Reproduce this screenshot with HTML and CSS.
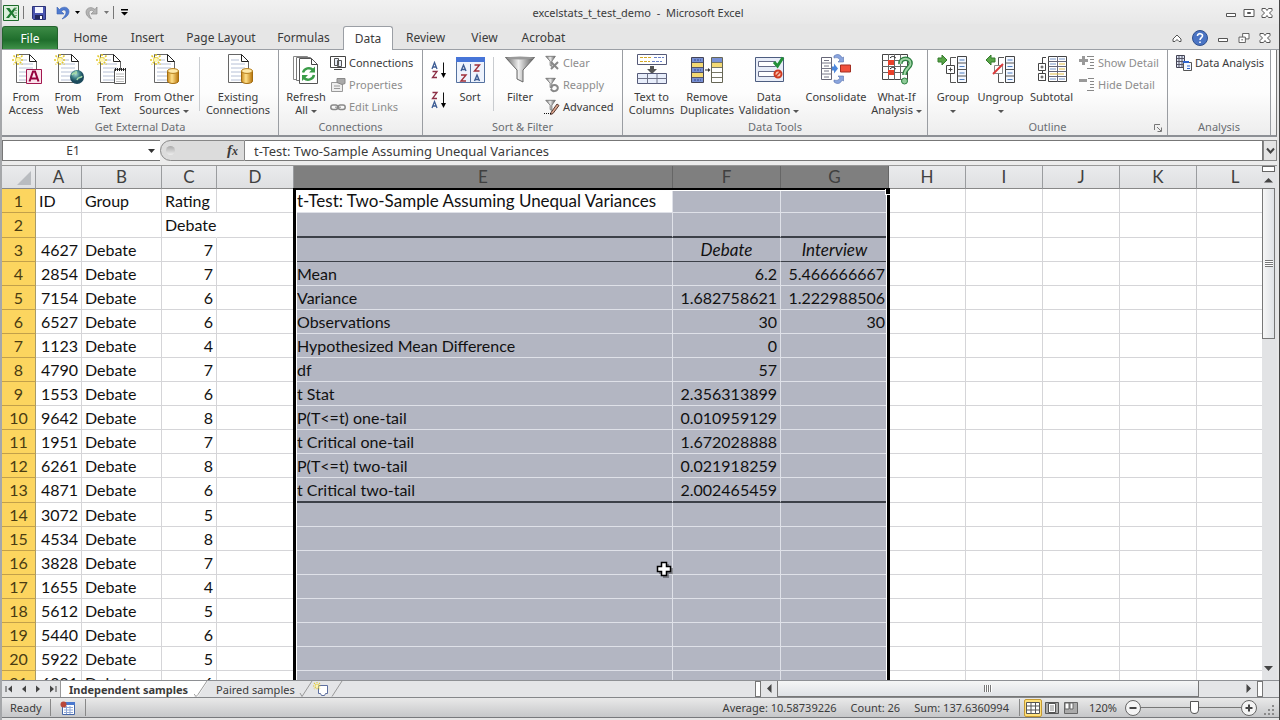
FILE: index.html
```html
<!DOCTYPE html>
<html lang="en">
<head>
<meta charset="utf-8">
<title>excelstats_t_test_demo - Microsoft Excel</title>
<link rel="stylesheet" href="styles.css">
</head>
<body>
<svg class="defs" aria-hidden="true">
  <defs>
    <linearGradient id="gold" x1="0" x2="1"><stop offset="0" stop-color="#c98a1c"/><stop offset=".4" stop-color="#ffe08a"/><stop offset="1" stop-color="#b87408"/></linearGradient>
    <linearGradient id="metal" x1="0" x2="1"><stop offset="0" stop-color="#666"/><stop offset=".45" stop-color="#eee"/><stop offset="1" stop-color="#555"/></linearGradient>
    <radialGradient id="globe" cx=".4" cy=".3"><stop offset="0" stop-color="#a9d8cf"/><stop offset=".6" stop-color="#3b7f86"/><stop offset="1" stop-color="#1c4a5c"/></radialGradient>
    <symbol id="page" viewBox="0 0 32 32">
      <path d="M6.500 1.500h13l7 7v21h-20z" fill="#fff" stroke="#666"/>
      <path d="M19.500 1.500v7h7z" fill="#fff" stroke="#222"/>
      <path d="M9 7h8M9 11h14M9 15h14M9 19h14M9 23h14M9 27h14" stroke="#b6c0d6"/>
    </symbol>
    <symbol id="spark" viewBox="0 0 12 12">
      <path d="M6 0v12M0 6h12M1.500 1.500l9 9M10.500 1.500l-9 9" stroke="#e3c92c" stroke-width="1.600" stroke-dasharray="2 1"/>
      <circle cx="6" cy="6" r="2.200" fill="#fff7b0"/>
    </symbol>
    <symbol id="drum" viewBox="0 0 12 16">
      <path d="M.5 3v10c0 3.300 11 3.300 11 0V3z" fill="url(#gold)" stroke="#a36c10"/>
      <ellipse cx="6" cy="3" rx="5.500" ry="2.400" fill="#ffe9a8" stroke="#b57e1a"/>
    </symbol>
    <symbol id="funnel" viewBox="0 0 16 16">
      <path d="M2 1.500h11L9 7v6L7 12V7z" fill="url(#metal)" stroke="#777"/>
    </symbol>
    <symbol id="outrows" viewBox="0 0 20 28">
      <path d="M7 1.500H1.500v8M1.500 18v8.500H7" fill="none" stroke="#555"/>
      <path d="M8.500.5h9v26h-9z" fill="#f4f8ff" stroke="#444"/>
      <path d="M8.500 7h9M8.500 13.500h9M8.500 20h9" stroke="#555"/>
      <path d="M10.500 4h5M10.500 10.500h5M10.500 17h5M10.500 23.500h5" stroke="#4f7fc0"/>
    </symbol>
  </defs>
</svg>

<div class="window">
<header class="titlebar">
  <div class="quick">
    <svg class="i16" viewBox="0 0 16 16"><path d="M.5.500h15v15H.5z" fill="#dcefdc" stroke="#1d6b2a"/><path d="M3 3l4 5-4 5h3l2.500-3.500L11 13h2.500L10 8l3.500-5H11L8.500 6 6.500 3z" fill="#1f7a32"/><path d="M11 3h3M11.500 5.500H14M11.500 8H14M11.500 10.500H14" stroke="#74a87a"/></svg>
    <span class="bar"></span>
    <button class="ico" aria-label="Save"><svg class="i16" viewBox="0 0 16 16"><path d="M1.500 1.500h13v13h-12l-1-1z" fill="#4a55b0" stroke="#2d3479"/><path d="M4 2h8v6H4z" fill="#f3f5ff"/><path d="M4 10h8v4H4z" fill="#23285c"/><path d="M9 11h2v3H9z" fill="#fff"/></svg></button>
    <button class="ico undo" aria-label="Undo"><svg class="i16" viewBox="0 0 16 16"><path d="M2 2v7h7L6.500 6.500C8 4 11.500 4.500 11 8c-.3 2-2 4-4 6 4-1.500 7-4 7-7.500C14 2 8 .5 4.500 4.500z" fill="#4f7bd0" stroke="#3c61b0" stroke-width=".6"/></svg></button>
    <svg class="caret" viewBox="0 0 5 3"><path d="M0 0h5L2.500 3z"/></svg>
    <button class="ico" aria-label="Redo"><svg class="i16" viewBox="0 0 16 16"><path d="M13 2v7H7l2.500-2.500C8 4.500 5 5 5 8c.2 2 1 4 2.500 6C4 12.500 2 10 2 7 2.500 2 8 1.500 11 4.500z" fill="#b5b5b5" stroke="#8b8b8b" stroke-width=".7"/></svg></button>
    <svg class="caret dim" viewBox="0 0 5 3"><path d="M0 0h5L2.500 3z"/></svg>
    <span class="bar"></span>
    <button class="ico" aria-label="Customize Quick Access Toolbar"><svg class="custom" viewBox="0 0 7 7"><path d="M0 0h7v1.500H0zM0 3h7L3.500 6.500z"/></svg></button>
  </div>
  <h1>excelstats_t_test_demo&nbsp; -&nbsp; Microsoft Excel</h1>
  <div class="winbtns">
    <button class="ico" aria-label="Minimize"><svg viewBox="0 0 12 10"><path d="M1.500 5.500h9v3h-9z" fill="#fff" stroke="#555"/></svg></button>
    <button class="ico" aria-label="Restore"><svg viewBox="0 0 12 10"><path d="M1 1.500h10v7H1zM4.500 4.500h3v1h-3z" fill="#fff" stroke="#555"/></svg></button>
    <button class="ico" aria-label="Close"><svg viewBox="0 0 12 10"><path d="M1 .5h3.500L6 2.500 7.500.500H11v2L8.500 5 11 7.500v2H7.500L6 7.500l-1.500 2H1v-2L3.500 5 1 2.500z" fill="#fff" stroke="#555"/></svg></button>
  </div>
</header>

<nav class="tabs">
  <button class="file">File</button>
  <button class="w1">Home</button><button class="w1">Insert</button><button class="w3">Page Layout</button><button class="w2">Formulas</button><button class="on">Data</button><button class="w2s">Review</button><button class="w1">View</button><button class="w2s">Acrobat</button>
  <div class="docbtns">
    <button class="ico" aria-label="Minimize the Ribbon"><svg viewBox="0 0 12 10"><path d="M2 6l4-4 4 4v2.500H8L6 6.500l-2 2H2z" fill="#fff" stroke="#555"/></svg></button>
    <button class="ico help" aria-label="Help"><svg viewBox="0 0 16 16"><circle cx="8" cy="8" r="7.500" fill="#4a74c4" stroke="#2f4f8c"/><path d="M5.500 6C5.500 2.800 11 3 10.500 6 10.300 7.500 8 8 8 10M8 11.500v1.500" fill="none" stroke="#fff" stroke-width="1.600"/></svg></button>
    <button class="ico" aria-label="Minimize Window"><svg viewBox="0 0 12 10"><path d="M1.500 5.500h9v3h-9z" fill="#fff" stroke="#555"/></svg></button>
    <button class="ico" aria-label="Restore Window"><svg viewBox="0 0 12 11"><path d="M4.500.5h7v6h-7z" fill="#fff" stroke="#555"/><path d="M.5 4.500h7v6h-7zM3 7.500h2" fill="#fff" stroke="#555"/></svg></button>
    <button class="ico" aria-label="Close Window"><svg viewBox="0 0 12 10"><path d="M1 .5h3.500L6 2.500 7.500.500H11v2L8.500 5 11 7.500v2H7.500L6 7.500l-1.500 2H1v-2L3.500 5 1 2.500z" fill="#fff" stroke="#555"/></svg></button>
  </div>
</nav>

<section class="ribbon">
  <div class="group g-ext">
    <div class="tools">
      <button class="big s"><svg viewBox="0 0 32 32"><use href="#page" width="32" height="32"/><use href="#spark" x="2" y="1" width="12" height="12"/><path d="M16.500 16.500h15v14h-15z" fill="#fbe3ec" stroke="#a3174f"/><path d="M19.500 28.500l3.500-10h2l3.500 10M21 25.500h6" fill="none" stroke="#95003c" stroke-width="2"/></svg>From<br>Access</button>
      <button class="big s"><svg viewBox="0 0 32 32"><use href="#page" width="32" height="32"/><use href="#spark" x="2" y="1" width="12" height="12"/><circle cx="25" cy="24" r="7" fill="url(#globe)"/><path d="M20 22c3-5 5 2 4-4M25 27c1-4 4-1 5-4" stroke="#a5dba8" fill="none" stroke-width="1.500"/></svg>From<br>Web</button>
      <button class="big s"><svg viewBox="0 0 32 32"><use href="#page" width="32" height="32"/><use href="#spark" x="2" y="1" width="12" height="12"/><path d="M20.500 16.500h11v14h-11z" fill="#fff" stroke="#555"/><path d="M21 16.500h11" stroke="#222" stroke-width="3" stroke-dasharray="1 1"/><path d="M22 21h8M22 23.500h8M22 26h8M22 28.500h8" stroke="#bbb"/></svg>From<br>Text</button>
      <button class="big m"><svg viewBox="0 0 32 32"><use href="#page" width="32" height="32"/><use href="#spark" x="2" y="1" width="12" height="12"/><use href="#drum" x="19" y="15" width="12" height="16"/></svg>From Other<br>Sources <i class="dd"></i></button>
      <span class="vsep"></span>
      <button class="big l"><svg viewBox="0 0 32 32"><use href="#page" width="32" height="32"/><use href="#drum" x="19" y="15" width="12" height="16"/></svg>Existing<br>Connections</button>
    </div>
    <h2>Get External Data</h2>
  </div>

  <div class="group g-con">
    <div class="tools">
      <button class="big s"><svg viewBox="0 0 32 32"><path d="M3.500 3.500h14v23h-14z" fill="#fff" stroke="#888"/><path d="M6.500 4.500h14v23h-14z" fill="#fff" stroke="#777"/><path d="M9.500 5.500h12l6 6v19h-18z" fill="#fff" stroke="#555"/><path d="M21.500 5.500v6h6" fill="none" stroke="#444"/><path d="M13 19.500a6 6 0 0 1 10-2.500M24 22a6 6 0 0 1-10 3" fill="none" stroke="#3a9c48" stroke-width="2.500"/><path d="M25 13.500v6h-6zM12 28v-6h6z" fill="#3a9c48"/></svg>Refresh<br>All <i class="dd"></i></button>
      <div class="stack">
        <button class="sm"><svg viewBox="0 0 16 16"><path d="M.5 1.500h15v11H.5z" fill="#fff" stroke="#444"/><path d="M4.500 3.500h4v7h-4zM7.500 5.500h4v6h-4z" fill="#e8edf7" stroke="#555"/><path d="M4 14.500h8" stroke="#444"/></svg>Connections</button>
        <button class="sm" disabled><svg viewBox="0 0 16 16"><path d="M1.500 5.500h11v9h-11z" fill="#eee" stroke="#999"/><path d="M7 1.500h8v5l-3 1-5-2z" fill="#aaa" stroke="#888"/><path d="M4 9h6M4 11.500h6" stroke="#999"/></svg>Properties</button>
        <button class="sm" disabled><svg viewBox="0 0 16 16"><rect x=".8" y="6" width="7" height="4.500" rx="2.200" fill="none" stroke="#888" stroke-width="1.500"/><rect x="8.200" y="6" width="7" height="4.500" rx="2.200" fill="none" stroke="#888" stroke-width="1.500"/><path d="M5 8.200h6" stroke="#888"/></svg>Edit Links</button>
      </div>
    </div>
    <h2>Connections</h2>
  </div>

  <div class="group g-sort">
    <div class="tools">
      <div class="az">
        <button class="ico" aria-label="Sort A to Z"><svg viewBox="0 0 16 18"><path d="M1 8L3.500 1.500 6 8M2 6h3" fill="none" stroke="#3d5c94" stroke-width="1.300"/><path d="M1.500 10.500H6l-4.500 6H6" fill="none" stroke="#8c2f45" stroke-width="1.300"/><path d="M12.500 1.500v13" stroke="#111"/><path d="M10 12h5l-2.500 5z"/></svg></button>
        <button class="ico" aria-label="Sort Z to A"><svg viewBox="0 0 16 18"><path d="M1.500 1.500H6l-4.500 6H6" fill="none" stroke="#8c2f45" stroke-width="1.300"/><path d="M1 17l2.500-6.500L6 17M2 15h3" fill="none" stroke="#3d5c94" stroke-width="1.300"/><path d="M12.500 1.500v13" stroke="#111"/><path d="M10 12h5l-2.500 5z"/></svg></button>
      </div>
      <button class="big s"><svg viewBox="0 0 32 32"><path d="M2.500 4.500h28v25h-28z" fill="#eef3fd" stroke="#54719f"/><path d="M2 4h29v5H2z" fill="#4775d8"/><path d="M16.500 11v18" stroke="#54719f"/><path d="M7 18l2.500-6 2.500 6M8 16.500h3M20.500 28l2.500-6 2.500 6M21.500 26.500h3" fill="none" stroke="#3d5c94" stroke-width="1.400"/><path d="M7 22h5l-5 6h5M20.500 12h5l-5 6h5" fill="none" stroke="#a0303a" stroke-width="1.400"/></svg>Sort</button>
      <span class="vsep"></span>
      <button class="big fl"><svg viewBox="0 0 32 32"><path d="M1.500 4.500h29L19 17v12l-6-3V17z" fill="url(#metal)" stroke="#666"/><ellipse cx="16" cy="5" rx="14" ry="1.500" fill="#999"/></svg>Filter</button>
      <div class="stack">
        <button class="sm" disabled><svg viewBox="0 0 16 16"><use href="#funnel" width="14" height="14"/><path d="M7 7l7 7M14 7l-7 7" stroke="#888" stroke-width="2"/></svg>Clear</button>
        <button class="sm" disabled><svg viewBox="0 0 16 16"><use href="#funnel" width="14" height="14"/><path d="M7 11c1-4 6-4 7 0M14 11c-1 4-6 4-7 1" fill="none" stroke="#888" stroke-width="2"/></svg>Reapply</button>
        <button class="sm"><svg viewBox="0 0 16 16"><use href="#funnel" width="14" height="14"/><path d="M7 13.500L13 5l2 1.500-6 8-2.500 1z" fill="#d9a48d" stroke="#5a3b32"/><path d="M0 14.500h7" stroke="#111" stroke-dasharray="1 1"/></svg>Advanced</button>
      </div>
    </div>
    <h2>Sort &amp; Filter</h2>
  </div>

  <div class="group g-tools">
    <div class="tools">
      <button class="big m2"><svg viewBox="0 0 32 32"><path d="M1.500 1.500h29v10h-29z" fill="#fff" stroke="#555a78"/><path d="M4 4.500h12M4 8.500h10" stroke="#d4a928" stroke-dasharray="3 1"/><path d="M18 4.500h10M16 8.500h10" stroke="#6a82c8" stroke-dasharray="3 1"/><path d="M14 13h4v3h3l-5 5-5-5h3z" fill="#555"/><path d="M1.500 20.500h29v10h-29z" fill="#e8eefb" stroke="#555a78"/><path d="M11.500 20.500v10M21 20.500v10M1.500 25.500h29" stroke="#6f7388"/></svg>Text to<br>Columns</button>
      <button class="big m3"><svg viewBox="0 0 32 32"><path d="M.5 4.500h12v25H.5z" fill="#7890d4" stroke="#445"/><path d="M1 10h11v4.500H1zM1 20h11v4.500H1z" fill="#f3d974"/><path d="M1 9.500h11M1 14.500h11M1 19.500h11M1 24.500h11" stroke="#556"/><path d="M3 7h7M3 17h7M3 27h7" stroke="#35488c" stroke-dasharray="2 1"/><path d="M14 17h4" stroke="#333"/><path d="M17 15l2.500 2-2.500 2z" fill="#333"/><path d="M20.500 4.500h11v25h-11z" fill="#fff" stroke="#665"/><path d="M21 5h10v5H21z" fill="#7890d4"/><path d="M21 10h10v4.500H21z" fill="#f3d974"/><path d="M21 9.500h10M21 14.500h10M21 19.500h10M21 24.500h10" stroke="#776"/></svg>Remove<br>Duplicates</button>
      <button class="big dv"><svg viewBox="0 0 32 32"><path d="M2.500 4.500h28v24h-28z" fill="#e8edf8" stroke="#4d5d80"/><path d="M5.500 8.500h17v5h-17zM5.500 18.500h17v5h-17z" fill="#fff" stroke="#666c88"/><path d="M21 9l3.500 4L30 4.500" fill="none" stroke="#239038" stroke-width="3"/><circle cx="25" cy="21" r="3.500" fill="#f6c1ad" stroke="#cf3a20" stroke-width="2"/><path d="M22.500 23.500l5-5" stroke="#cf3a20" stroke-width="1.500"/></svg>Data<br>Validation <i class="dd"></i></button>
      <button class="big cn"><svg viewBox="0 0 32 32"><path d="M1.500 4.500h10v22h-10z" fill="#fff" stroke="#667"/><path d="M1.500 10h10M1.500 15.500h10M1.500 21h10M4 7.500h5M4 13h5M4 18h5M4 24h5" stroke="#778"/><path d="M12 13.500h2v-3l4 5-4 5v-3h-2z" fill="#4c87dc"/><path d="M20.500 12h10v7h-10z" fill="#f0503c" stroke="#a32f22"/><path d="M14 3c4-3 7-1 8 2l1.500-1v5H18l2-2c-1-2-3-3-6-2zM14 29c4 3 7 1 8-2l1.500 1v-5H18l2 2c-1 2-3 3-6 2z" fill="#8aa5de" stroke="#5570ae" stroke-width=".6"/></svg>Consolidate</button>
      <button class="big m2"><svg viewBox="0 0 32 32"><path d="M1.500 1.500h25v25h-25z" fill="#fff" stroke="#444"/><path d="M7.500 1v26M13.500 1v26M19.500 1v26M1 7.500h26M1 13.500h26M1 19.500h26" stroke="#666"/><path d="M7 7h6v5H7zM7 17h6v5H7z" fill="#e8402a"/><path d="M9 5c3-3 4-1 6 0M9 16c3-3 4-1 6 0" stroke="#222" fill="none"/><path d="M19.500 11c-1-7 11-7 10 0-.5 4-6 4.500-6 11" fill="none" stroke="#2b7f3f" stroke-width="4.500"/><path d="M19.500 11c-1-7 11-7 10 0-.5 4-6 4.500-6 11" fill="none" stroke="#9fd3a4" stroke-width="2"/><circle cx="23.500" cy="28" r="3" fill="#8fcb98" stroke="#2b7f3f"/></svg>What-If<br>Analysis <i class="dd"></i></button>
    </div>
    <h2>Data Tools</h2>
  </div>

  <div class="group g-out">
    <div class="tools">
      <button class="big gr"><svg viewBox="0 0 32 32"><use href="#outrows" x="12" y="3" width="20" height="28"/><path d="M1 5h4V2l5 5-5 5V9H1z" fill="#58a548" stroke="#357a2c"/><path d="M9.500 12.500h8v8h-8zM11.500 16.500h4M13.500 14.500v4" fill="#fff" stroke="#444"/></svg>Group<br><i class="dd"></i></button>
      <button class="big m2"><svg viewBox="0 0 32 32"><use href="#outrows" x="12" y="3" width="20" height="28"/><path d="M10 5H6V2L1 7l5 5V9h4z" fill="#58a548" stroke="#357a2c"/><path d="M9.500 12.500h8v8h-8z" fill="#fff" stroke="#888"/><path d="M8 21L18 11" stroke="#dc3a3a" stroke-width="2"/></svg>Ungroup<br><i class="dd"></i></button>
      <button class="big m2"><svg viewBox="0 0 32 32"><path d="M12.500 3.500h18v25h-18z" fill="#fff" stroke="#444"/><path d="M21.500 3v26M12.500 8.500h18M12.500 13.500h18M12.500 18.500h18M12.500 23.500h18" stroke="#667"/><path d="M14 6h6M14 11h6M14 16h6M14 26h6M23 6h6M23 26h6" stroke="#7696c9"/><path d="M23 11h6M23 16h6M14 21h14" stroke="#e4bd45"/><path d="M10 4.500H6.500v23H10" fill="none" stroke="#444"/><path d="M2.500 10.500h7v7h-7zM2.500 20.500h7v7h-7zM4.500 14h3M6 12.500v3M4.500 24h3M6 22.500v3" fill="#fff" stroke="#444"/></svg>Subtotal</button>
      <div class="stack">
        <button class="sm" disabled><svg viewBox="0 0 16 16"><path d="M3 1h3v3h3v3H6v3H3V7H0V4h3z" fill="#999"/><path d="M8 1.500h7M11 4.500h4M11 7.500h4M11 10.500h4M8 13.500h7" stroke="#888"/></svg>Show Detail</button>
        <button class="sm" disabled><svg viewBox="0 0 16 16"><path d="M0 2h8v3H0z" fill="#999"/><path d="M9 1.500h6M11 4.500h4M11 7.500h4M11 10.500h4M8 13.500h7" stroke="#888"/></svg>Hide Detail</button>
      </div>
    </div>
    <h2>Outline</h2>
    <button class="ico launch" aria-label="Outline settings"><svg viewBox="0 0 8 8"><path d="M.5 6V.5H6M3 3l4 4M7.500 3.500v4h-4" fill="none" stroke="#777"/></svg></button>
  </div>

  <div class="group g-ana">
    <div class="tools">
      <div class="stack">
        <button class="sm"><svg viewBox="0 0 16 16"><path d="M.5.500h8v12h-8z" fill="#dfe6f5" stroke="#445"/><path d="M3 1v11M6 1v11M1 3.500h8M1 6.500h8M1 9.500h8" stroke="#556"/><path d="M7.500 7.500h8v8h-8z" fill="#f4f8ff" stroke="#555"/><path d="M7 6h6v2H7z" fill="#2d64cf"/><path d="M11 11h3M11 13.500h3" stroke="#2d64cf"/></svg>Data Analysis</button>
      </div>
    </div>
    <h2>Analysis</h2>
  </div>
</section>

<div class="formula">
  <div class="namebox"><input aria-label="Name Box" value="E1"><button class="ico" aria-label="Name list"><svg viewBox="0 0 7 4"><path d="M0 0h7L3.500 4z" fill="#333"/></svg></button></div>
  <div class="fx"><span class="knob"></span><button class="ico" aria-label="Insert Function"><em>f<b>x</b></em></button></div>
  <input class="fin" aria-label="Formula Bar" value="t-Test: Two-Sample Assuming Unequal Variances">
  <button class="ico expand" aria-label="Expand Formula Bar"><svg viewBox="0 0 9 8"><path d="M1 1.500l3.500 4 3.500-4" fill="none" stroke="#444" stroke-width="2"/></svg></button>
</div>

<main class="sheet">
  <div class="grid">
    <table>
      <colgroup><col class="cr"><col class="ca"><col class="cb"><col class="cc"><col class="cd"><col class="ce"><col class="cf"><col class="cf"><col class="cd"><col class="cd"><col class="cd"><col class="cd"><col class="cd"></colgroup>
      <thead><tr><th class="corner"><svg viewBox="0 0 14 14"><path d="M14 0v14H0z" fill="#b9bcc0"/></svg></th><th>A</th><th>B</th><th>C</th><th>D</th><th>E</th><th>F</th><th>G</th><th>H</th><th>I</th><th>J</th><th>K</th><th>L</th></tr></thead>
      <tbody>
        <tr class="t"><th>1</th><td>ID</td><td>Group</td><td>Rating</td><td></td><td class="active">t-Test: Two-Sample Assuming Unequal Variances</td><td></td><td></td><td></td><td></td><td></td><td></td><td></td></tr>
        <tr class="t rule"><th>2</th><td></td><td></td><td class="spill">Debate</td><td></td><td></td><td></td><td></td><td></td><td></td><td></td><td></td><td></td></tr>
        <tr class="head"><th>3</th><td>4627</td><td>Debate</td><td>7</td><td></td><td></td><td>Debate</td><td>Interview</td><td></td><td></td><td></td><td></td><td></td></tr>
        <tr><th>4</th><td>2854</td><td>Debate</td><td>7</td><td></td><td>Mean</td><td>6.2</td><td>5.466666667</td><td></td><td></td><td></td><td></td><td></td></tr>
        <tr><th>5</th><td>7154</td><td>Debate</td><td>6</td><td></td><td>Variance</td><td>1.682758621</td><td>1.222988506</td><td></td><td></td><td></td><td></td><td></td></tr>
        <tr><th>6</th><td>6527</td><td>Debate</td><td>6</td><td></td><td>Observations</td><td>30</td><td>30</td><td></td><td></td><td></td><td></td><td></td></tr>
        <tr><th>7</th><td>1123</td><td>Debate</td><td>4</td><td></td><td>Hypothesized Mean Difference</td><td>0</td><td></td><td></td><td></td><td></td><td></td><td></td></tr>
        <tr><th>8</th><td>4790</td><td>Debate</td><td>7</td><td></td><td>df</td><td>57</td><td></td><td></td><td></td><td></td><td></td><td></td></tr>
        <tr><th>9</th><td>1553</td><td>Debate</td><td>6</td><td></td><td>t Stat</td><td>2.356313899</td><td></td><td></td><td></td><td></td><td></td><td></td></tr>
        <tr><th>10</th><td>9642</td><td>Debate</td><td>8</td><td></td><td>P(T&lt;=t) one-tail</td><td>0.010959129</td><td></td><td></td><td></td><td></td><td></td><td></td></tr>
        <tr><th>11</th><td>1951</td><td>Debate</td><td>7</td><td></td><td>t Critical one-tail</td><td>1.672028888</td><td></td><td></td><td></td><td></td><td></td><td></td></tr>
        <tr><th>12</th><td>6261</td><td>Debate</td><td>8</td><td></td><td>P(T&lt;=t) two-tail</td><td>0.021918259</td><td></td><td></td><td></td><td></td><td></td><td></td></tr>
        <tr class="rule"><th>13</th><td>4871</td><td>Debate</td><td>6</td><td></td><td>t Critical two-tail</td><td>2.002465459</td><td></td><td></td><td></td><td></td><td></td><td></td></tr>
        <tr><th>14</th><td>3072</td><td>Debate</td><td>5</td><td></td><td></td><td></td><td></td><td></td><td></td><td></td><td></td><td></td></tr>
        <tr><th>15</th><td>4534</td><td>Debate</td><td>8</td><td></td><td></td><td></td><td></td><td></td><td></td><td></td><td></td><td></td></tr>
        <tr><th>16</th><td>3828</td><td>Debate</td><td>7</td><td></td><td></td><td></td><td></td><td></td><td></td><td></td><td></td><td></td></tr>
        <tr><th>17</th><td>1655</td><td>Debate</td><td>4</td><td></td><td></td><td></td><td></td><td></td><td></td><td></td><td></td><td></td></tr>
        <tr><th>18</th><td>5612</td><td>Debate</td><td>5</td><td></td><td></td><td></td><td></td><td></td><td></td><td></td><td></td><td></td></tr>
        <tr><th>19</th><td>5440</td><td>Debate</td><td>6</td><td></td><td></td><td></td><td></td><td></td><td></td><td></td><td></td><td></td></tr>
        <tr><th>20</th><td>5922</td><td>Debate</td><td>5</td><td></td><td></td><td></td><td></td><td></td><td></td><td></td><td></td><td></td></tr>
        <tr><th>21</th><td>6291</td><td>Debate</td><td>6</td><td></td><td></td><td></td><td></td><td></td><td></td><td></td><td></td><td></td></tr>
      </tbody>
    </table>
    <div class="selection"><span class="handle"></span></div>
    <svg class="cursor" viewBox="0 0 18 18"><path d="M7 3h6v4h4v6h-4v4H7v-4H3V7h4z" fill="#0005"/><path d="M5.500 1.500h5v4h4v5h-4v4h-5v-4h-4v-5h4z" fill="#fff" stroke="#000" stroke-width="1.500"/></svg>
  </div>
  <div class="vscroll">
    <span class="split"></span>
    <button class="ico" aria-label="Scroll up"><svg viewBox="0 0 10 6"><path d="M0 5.500h9L4.500 1z" fill="#444"/></svg></button>
    <span class="vtrack"><span class="vthumb"><i></i></span></span>
    <button class="ico" aria-label="Scroll down"><svg viewBox="0 0 10 6"><path d="M0 0h9L4.500 5z" fill="#444"/></svg></button>
  </div>
</main>

<div class="sheetbar">
  <div class="navs">
    <button class="ico" aria-label="First sheet"><svg viewBox="0 0 8 8"><path d="M1 1v6" stroke="#444"/><path d="M7 .5v7L3 4z" fill="#444"/></svg></button>
    <button class="ico" aria-label="Previous sheet"><svg viewBox="0 0 8 8"><path d="M6 .5v7L2 4z" fill="#444"/></svg></button>
    <button class="ico" aria-label="Next sheet"><svg viewBox="0 0 8 8"><path d="M2 .5v7L6 4z" fill="#444"/></svg></button>
    <button class="ico" aria-label="Last sheet"><svg viewBox="0 0 8 8"><path d="M7 1v6" stroke="#444"/><path d="M1 .5v7L5 4z" fill="#444"/></svg></button>
  </div>
  <button class="stab cur">Independent samples</button>
  <svg class="slant" viewBox="0 0 14 16"><path d="M0 0h14L4 15.500H0z" fill="#fff"/><path d="M13 0L4 13.500 2 15.500M0 13l2 2.500" fill="none" stroke="#999"/></svg>
  <button class="stab">Paired samples</button>
  <svg class="slant" viewBox="0 0 14 16"><path d="M13 0L3 15.500M1 12l2 3.500" fill="none" stroke="#999"/></svg>
  <button class="ico" aria-label="Insert Worksheet"><svg class="i16" viewBox="0 0 16 14"><path d="M5.500 3.500h9v8h-2l-1 2h-3l-1-2h-2z" fill="#fff" stroke="#5d6fa0"/><use href="#spark" x="0" y="0" width="8" height="8"/></svg></button>
  <svg class="slant" viewBox="0 0 14 16"><path d="M13 0L3 15.500" fill="none" stroke="#999"/></svg>
  <div class="hscroll">
    <span class="hsplit"></span>
    <button class="ico" aria-label="Scroll left"><svg viewBox="0 0 6 10"><path d="M5.500 0v9L1 4.500z" fill="#444"/></svg></button>
    <span class="htrack"><span class="hthumb"><i></i></span></span>
    <button class="ico" aria-label="Scroll right"><svg viewBox="0 0 6 10"><path d="M.5 0v9L5 4.500z" fill="#444"/></svg></button>
    <span class="hsplit"></span>
  </div>
</div>

<footer class="status">
  <span class="ready">Ready</span>
  <span class="macro"><button class="ico" aria-label="Record Macro"><svg class="i16" viewBox="0 0 16 14"><path d="M2.500 1.500h12v12h-12z" fill="#fff" stroke="#4567a8"/><path d="M2 1h13v3H2z" fill="#4a78cf"/><path d="M4 6.500h9M4 9h9M4 11.500h9M6.500 5v8M10 5v8" stroke="#8fa7d6"/><circle cx="3.500" cy="3.500" r="3" fill="#b9473a"/></svg></button></span>
  <div class="sums"><span>Average: 10.58739226</span><span>Count: 26</span><span>Sum: 137.6360994</span></div>
  <div class="views">
    <button class="ico sel" aria-label="Normal view"><svg viewBox="0 0 14 12"><path d="M.5.500h13v11H.5zM5 .5v11M9.500.500v11M.5 4h13M.5 8h13" fill="#fff" stroke="#555"/></svg></button>
    <button class="ico" aria-label="Page Layout view"><svg viewBox="0 0 14 12"><path d="M.5.500h13v11H.5z" fill="#aaa" stroke="#555"/><path d="M3.500 1.500h7v9h-7z" fill="#fff" stroke="#555"/><path d="M5 4h4M5 6h4M5 8h4" stroke="#888"/></svg></button>
    <button class="ico" aria-label="Page Break Preview"><svg viewBox="0 0 14 12"><path d="M.5.500h13v11H.5z" fill="#aaa" stroke="#666"/><path d="M1 1h4v6H1zM6 1h3v6H6z" fill="#fff" stroke="#666"/></svg></button>
  </div>
  <label class="pct" for="zoom">120%</label>
  <button class="ico round" aria-label="Zoom Out"><svg viewBox="0 0 16 16"><circle cx="8" cy="8" r="7.500" fill="#f4f4f4" stroke="#666"/><path d="M4.500 8h7" stroke="#444" stroke-width="2"/></svg></button>
  <input id="zoom" type="range" min="0" max="100" value="54">
  <button class="ico round" aria-label="Zoom In"><svg viewBox="0 0 16 16"><circle cx="8" cy="8" r="7.500" fill="#f4f4f4" stroke="#666"/><path d="M4.500 8h7M8 4.500v7" stroke="#444" stroke-width="2"/></svg></button>
  <svg class="grip" viewBox="0 0 12 12"><path d="M8 1h2v2H8zM4 5h2v2H4zM8 5h2v2H8zM0 9h2v2H0zM4 9h2v2H4zM8 9h2v2H8z" fill="#8a8a8a"/></svg>
</footer>
</div>
</body>
</html>
```

FILE: styles.css
```css
* { box-sizing: border-box; }
html, body { height: 100%; margin: 0; }
body {
  background: #e6e6e6;
  font: 12px/13px "Noto Sans", "Open Sans", sans-serif;
  color: #3b3b3b;
  overflow: hidden;
}
button, input { font: inherit; color: inherit; }
button { background: none; border: 0; padding: 0; white-space: nowrap; }
svg { display: block; flex: none; }
.defs { position: absolute; width: 0; height: 0; }
.window {
  height: 100vh;
  display: flex;
  flex-direction: column;
  border-left: 2px solid #a5a7aa;
  border-right: 1px solid #444;
  padding-bottom: 2px;
  background: #e6e6e6;
}
.i16 { width: 16px; height: 16px; }
.ico { display: flex; align-items: center; justify-content: center; }
.dd { display: inline-block; border: 3px solid transparent; border-top: 3px solid #555; border-bottom: 0; vertical-align: middle; }

/* title bar */
.titlebar {
  flex: none; height: 24px;
  display: flex; align-items: center;
  padding: 1px 6px 0 1px;
  background: linear-gradient(#f1f1f1, #e8e8e8);
}
.quick, .winbtns { flex: 1 1 0; display: flex; align-items: center; }
.quick { gap: 4px; }
.bar { width: 1px; height: 13px; background: #777; }
.bar + .ico { margin-left: 3px; }
.quick .undo { margin-left: 4px; }
.caret { width: 5px; height: 3px; }
.dim { opacity: .5; }
.custom { width: 7px; height: 7px; }
h1 { margin: 0; font-size: 11px; font-weight: 400; white-space: nowrap; }
.winbtns { justify-content: flex-end; gap: 6px; }
.winbtns svg, .docbtns svg { width: 12px; height: 10px; }

/* ribbon tabs */
.tabs { flex: none; height: 26px; display: flex; align-items: stretch; padding-top: 2px; border-bottom: 1px solid #9b9fa5; }
.file { width: 56px; color: #fff; background: linear-gradient(#3c8a45, #1f6e2c 60%, #3f9148); border: 1px solid #24632d; border-bottom: 0; border-radius: 3px 3px 0 0; margin-right: 4px; }
.w1 { width: 57px; }
.w2 { width: 75px; }
.w2s { width: 61px; }
.w3 { width: 90px; }
.on { width: 50px; background: #fff; border: 1px solid #9b9fa5; border-bottom: 0; border-radius: 3px 3px 0 0; margin: 0 2px -1px; }
.docbtns { margin-left: auto; display: flex; align-items: center; gap: 9px; padding-right: 8px; }
.docbtns .help svg { width: 16px; height: 16px; }

/* ribbon */
.ribbon {
  flex: none; height: 87px; display: flex;
  margin-right: 2px;
  background: linear-gradient(#fff, #fdfdfd 50%, #ededed);
  border-bottom: 2px solid #8d9095;
  border-right: 1px solid #777;
}
.group { position: relative; display: flex; flex-direction: column; justify-content: space-between; border-right: 1px solid #9a9da2; padding: 3px 3px 1px; }
.g-ext { width: 277px; }
.g-con { width: 144px; }
.g-sort { width: 200px; }
.g-tools { width: 305px; }
.g-out { width: 240px; }
.g-ana { flex: 0 1 103px; }
.g-ana .tools { padding-left: 5px; }
.tools { display: flex; align-items: flex-start; }
h2 { margin: 0; font-size: 11px; line-height: 14px; font-weight: 400; color: #6a6d72; text-align: center; }
.big { display: flow-root; text-align: center; line-height: 13px; font-size: 11px; }
.big svg { width: 32px; height: 32px; margin: 0 auto 5px; }
.s { width: 42px; }
.m { width: 66px; }
.l { width: 72px; }
.m2 { width: 51px; }
.m3 { width: 60px; }
.dv { width: 64px; }
.cn { width: 70px; }
.gr { width: 44px; }
.fl { width: 48px; }
.g-con .s { width: 48px; }
.vsep { width: 1px; height: 54px; margin: 4px 2px 0; background: #c9ccd0; }
.stack { display: flex; flex-direction: column; }
.sm { display: flex; align-items: center; gap: 3px; height: 22px; line-height: 20px; font-size: 11px; margin-top: -1px; margin-bottom: 1px; }
.sm svg { width: 16px; height: 16px; }
.sm:disabled { color: #8d8d8d; }
.az { display: flex; flex-direction: column; gap: 12px; padding: 8px 2px 0 5px; }
.az svg { width: 16px; height: 18px; }
.launch { position: absolute; right: 5px; bottom: 3px; }
.launch svg { width: 8px; height: 8px; }
.g-out .stack { padding-left: 2px; }

/* formula bar */
.formula { flex: none; height: 29px; display: flex; margin-right: 2px; padding: 3px 0 4px 0; background: #ececec; border-bottom: 1px solid #999; }
.formula input { border: 0; background: none; padding: 0; outline: 0; }
.namebox { width: 158px; display: flex; background: #fff; border: 1px solid #777; border-right: 0; }
.namebox input { flex: 1; min-width: 0; text-align: center; }
.namebox svg { width: 7px; height: 4px; margin: 0 5px; }
.fx { width: 85px; display: flex; align-items: center; justify-content: space-between; background: #dcdcdc; border: 1px solid #888; border-radius: 11px 0 0 11px; padding: 0 6px 0 5px; }
.knob { width: 9px; height: 9px; border-radius: 50%; background: linear-gradient(#aaa, #eee); }
.fx em { font: italic bold 15px/18px "Liberation Serif", serif; }
.fx b { font-size: 12px; }
.formula .fin { flex: 1; min-width: 0; font-size: 13px; background: #fff; border: 1px solid #777; border-left: 0; padding-left: 9px; }
.expand { width: 14px; border: 1px solid #888; background: #e4e4e4; }
.expand svg { width: 9px; height: 8px; }

/* worksheet */
.sheet { flex: 1; min-height: 0; display: flex; padding-right: 2px; }
.grid { flex: 1; min-width: 0; position: relative; overflow: hidden; background: #fff; }
table { table-layout: fixed; width: 1262px; border-collapse: separate; border-spacing: 0; font: 16px/20px Lato, sans-serif; color: #111; }
.cr { width: 34px; } .ca { width: 46px; } .cb { width: 80px; } .cc { width: 55px; }
.cd { width: 77px; } .ce { width: 379px; } .cf { width: 108px; }
th { font-weight: 400; padding: 0; color: #404040; }
thead th { height: 23px; background: linear-gradient(#eaebed, #dfe0e2); border-right: 1px solid #9a9c9f; border-bottom: 1px solid #888; font-size: 17px; }
thead th:nth-child(n+6):nth-child(-n+8) { background: #7f7f7f; border-right-color: #666; border-bottom-color: #000; }
.corner svg { width: 14px; height: 14px; margin: 2px 4px 0 auto; }
td { height: 24px; padding: 0 3px; border-right: 1px solid #d5d5d8; border-bottom: 1px solid #d5d5d8; white-space: nowrap; text-align: right; }
tbody th { background: #fcd55f; border-right: 1px solid #a79a68; border-bottom: 1px solid #c2a04a; color: #4a3c12; }
td:nth-child(3), td:nth-child(6), .t td { text-align: left; }
td:nth-child(6), td:nth-child(7), td:nth-child(8) { background: #b3b6c2; border-color: #dfe1e8; }
.spill { border-right-color: #fff; overflow: visible; }
.rule td { height: 25px; }
.rule td:nth-child(n+6):nth-child(-n+8) { border-bottom: 2px solid #3c4048; }
.head td:nth-child(n+6):nth-child(-n+8) { border-bottom-color: #3c4048; }
.head td:nth-child(n+7) { text-align: center; font-style: italic; font-size: 17px; }
td.active { background: #fff !important; font-size: 17px; }
.selection { position: absolute; left: 291px; top: 22px; width: 597px; bottom: -6px; border: 3px solid #000; border-top-width: 2px; box-shadow: inset 0 0 0 1px #fff; }
.handle { position: absolute; right: -4px; top: -1px; width: 6px; height: 6px; background: #000; border: 1px solid #fff; border-top: 0; }
.cursor { position: absolute; left: 654px; top: 395px; width: 18px; height: 18px; }

/* vertical scroll bar */
.vscroll { width: 15px; flex: none; display: flex; flex-direction: column; background: #e2e3e5; align-items: flex-start; padding-bottom: 3px; }
.split { width: 13px; height: 6px; border: 1px solid #666; background: #fff; }
.vscroll .ico { width: 14px; height: 16px; }
.vscroll svg { width: 10px; height: 6px; }
.vtrack { flex: 1; width: 13px; display: flex; }
.vthumb { height: 32%; width: 13px; border: 1px solid #777; background: linear-gradient(90deg, #f6f6f6, #dfe2e6); display: flex; align-items: center; justify-content: center; }
.vthumb i { width: 8px; height: 7px; background: repeating-linear-gradient(#777 0 1px, #fff 1px 2px); }

/* sheet tabs */
.sheetbar { flex: none; height: 17px; display: flex; background: #e4e5e7; border-top: 1px solid #8e9094; font-size: 11px; }
.navs { display: flex; width: 59px; justify-content: space-around; border-right: 1px solid #999; }
.navs svg { width: 8px; height: 8px; }
.stab { padding: 0 4px 0 8px; }
.cur { background: #fff; font-weight: 700; padding-right: 6px; }
.slant { width: 14px; height: 16px; }
.hscroll { margin-left: auto; width: 41%; display: flex; align-items: stretch; padding-right: 16px; }
.hscroll svg { width: 6px; height: 10px; }
.hscroll .ico { width: 16px; }
.hsplit { width: 6px; border: 1px solid #777; background: #fff; }
.htrack { flex: 1; display: flex; }
.hthumb { width: 91%; border: 1px solid #777; border-top: 0; background: linear-gradient(#f6f6f6, #dfe2e6); display: flex; align-items: center; justify-content: center; }
.hthumb i { width: 8px; height: 7px; background: repeating-linear-gradient(90deg, #777 0 1px, #fff 1px 2px); }

/* status bar */
.status { flex: none; height: 21px; display: flex; align-items: center; background: linear-gradient(#e9e9e9, #c6c7c9); border-top: 1px solid #85878a; border-bottom: 1px solid #77797c; font-size: 11px; }
.ready { width: 49px; padding-left: 8px; border-right: 1px solid #888; line-height: 17px; }
.macro { width: 35px; padding-left: 9px; border-right: 1px solid #888; height: 17px; display: flex; align-items: center; }
.sums { margin-left: auto; display: flex; gap: 14px; padding-right: 10px; border-right: 1px solid #888; line-height: 17px; }
.views { display: flex; gap: 1px; padding: 0 9px 0 4px; }
.views .ico { width: 18px; height: 18px; }
.views svg { width: 14px; height: 12px; }
.views .sel { background: #ffe07a; border: 1px solid #c59a32; border-radius: 2px; }
.pct { padding-right: 8px; }
.round svg { width: 16px; height: 16px; }
#zoom { appearance: none; width: 100px; height: 14px; margin: 0; background: linear-gradient(#777, #777) center / 100% 1px no-repeat; }
#zoom::-webkit-slider-thumb { appearance: none; width: 9px; height: 13px; background: #fff; border: 1px solid #555; border-radius: 1px 1px 5px 5px; }
.grip { width: 12px; height: 12px; margin: 4px 3px 0 7px; }
```
